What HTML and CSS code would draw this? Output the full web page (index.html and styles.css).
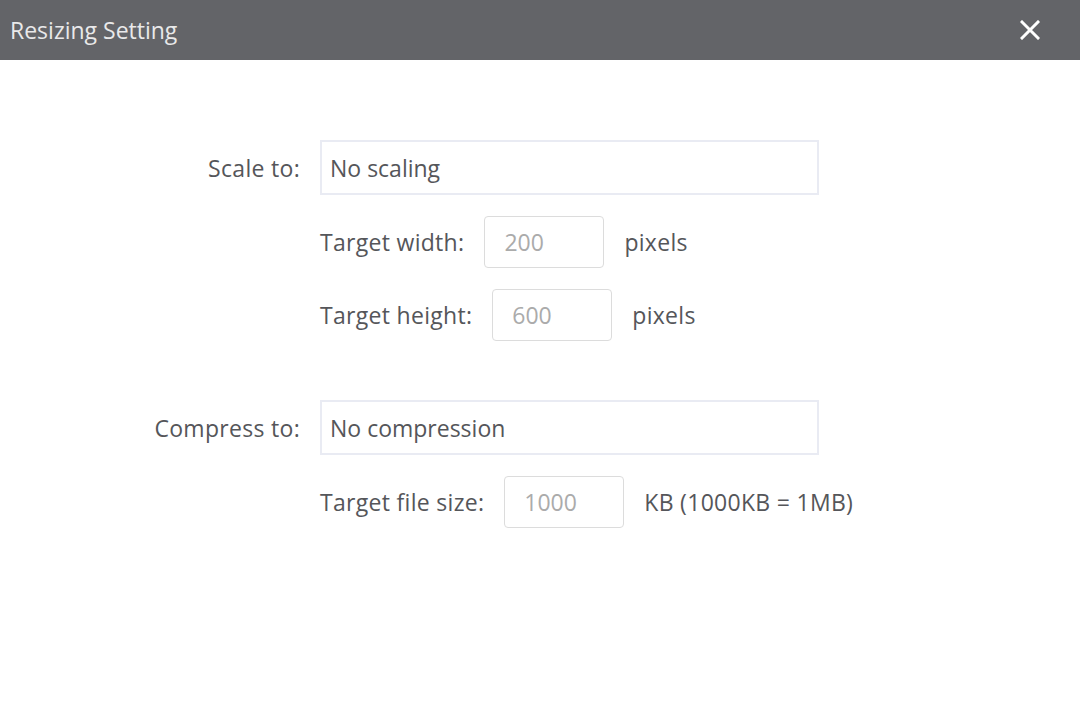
FILE: index.html
```html
<!DOCTYPE html>
<html lang="en">
<head>
    <meta charset="UTF-8">
    <meta name="viewport" content="width=device-width, initial-scale=1.0">
    <title>Resizing Setting</title>
    <link rel="stylesheet" href="styles.css">
</head>
<body>
    <!-- Title bar -->
    <div class="titlebar">
        <h1>Resizing Setting</h1>
        <button class="close" aria-label="Close">
            <svg width="20" height="20" viewBox="0 0 20 20">
                <path d="M2 2 L18 18 M18 2 L2 18" stroke="#fff" stroke-width="3" stroke-linecap="square"/>
            </svg>
        </button>
    </div>

    <div class="content">
        <!-- Scale -->
        <div class="section">
            <div class="row">
                <label class="label">Scale to:</label>
                <div class="select">No scaling</div>
            </div>
            <div class="row sub">
                <span>Target width:</span>
                <input class="num" type="text" placeholder="200">
                <span>pixels</span>
            </div>
            <div class="row sub">
                <span>Target height:</span>
                <input class="num" type="text" placeholder="600">
                <span>pixels</span>
            </div>
        </div>

        <!-- Compress -->
        <div class="section">
            <div class="row">
                <label class="label">Compress to:</label>
                <div class="select">No compression</div>
            </div>
            <div class="row sub">
                <span>Target file size:</span>
                <input class="num" type="text" placeholder="1000">
                <span>KB (1000KB = 1MB)</span>
            </div>
        </div>
    </div>
</body>
</html>
```

FILE: styles.css
```css
body {
    margin: 0;
    font-family: "Open Sans", "Noto Sans", sans-serif;
    background: #fff;
    color: #55565a;
    width: 1080px;
    height: 720px;
    overflow: hidden;
}

.titlebar {
    height: 60px;
    background: #636468;
    display: flex;
    align-items: center;
    justify-content: space-between;
    padding: 0 40px 0 10px;
}

.titlebar h1 {
    margin: 0;
    font-size: 23px;
    font-weight: normal;
    color: #e9e9ea;
}

.close {
    background: none;
    border: none;
    padding: 0;
    width: 20px;
    height: 20px;
    display: flex;
    cursor: pointer;
}

.content {
    padding-top: 80px;
    display: flex;
    flex-direction: column;
    gap: 59px;
}

.section {
    display: flex;
    flex-direction: column;
    gap: 21px;
}

.row {
    display: flex;
    align-items: center;
    gap: 20px;
    font-size: 23px;
    letter-spacing: 0.3px;
}

.label {
    width: 300px;
    text-align: right;
}

.select {
    width: 487px;
    height: 51px;
    border: 2px solid #e9ebf3;
    padding-left: 8px;
    display: flex;
    align-items: center;
    letter-spacing: 0;
}

.sub {
    padding-left: 320px;
}

.num {
    box-sizing: border-box;
    width: 120px;
    height: 52px;
    border: 1px solid #dcdcdc;
    border-radius: 4px;
    padding: 0 0 0 19px;
    font-family: inherit;
    font-size: 23px;
    color: #55565a;
    outline: none;
}

.num::placeholder {
    color: #ababab;
}
```
